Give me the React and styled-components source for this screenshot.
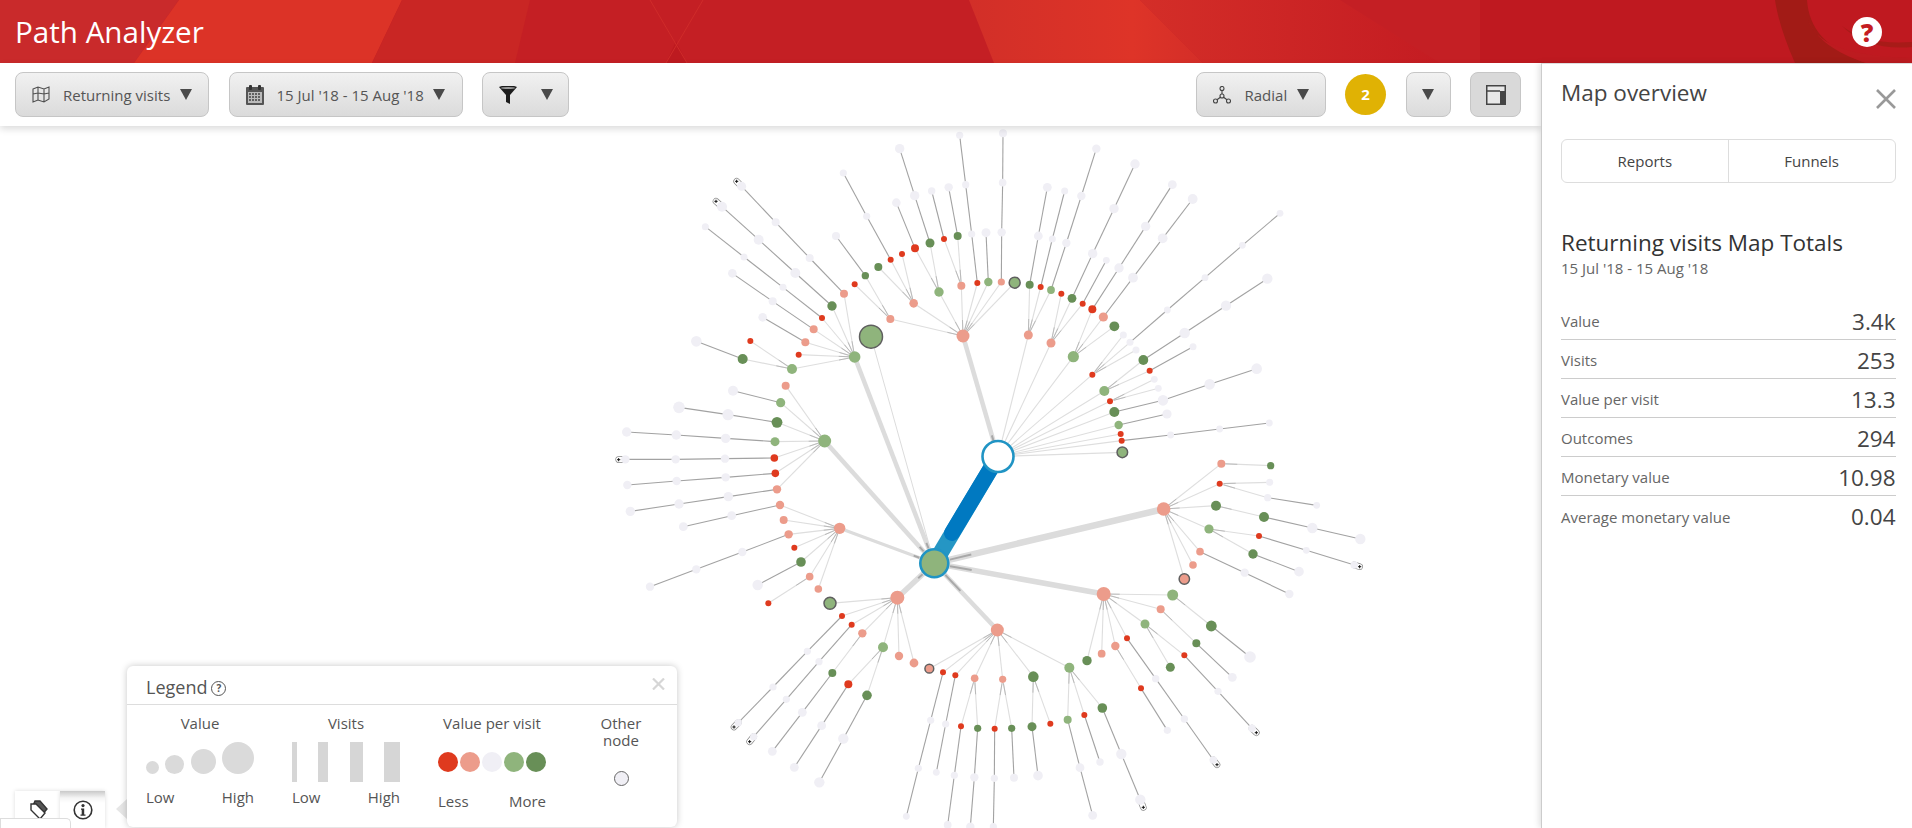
import styled, { createGlobalStyle } from 'styled-components';

const GlobalStyle = createGlobalStyle`
  html, body {
    margin: 0;
    padding: 0;
    height: 100%;
    overflow: hidden;
    background: #fff;
    font-family: 'Open Sans', 'Noto Sans', sans-serif;
  }
`;

// graph data, coordinates are taken from 3x crops so every branch has its own origin
const n = (x, y, r, kind, ...kids) => ({ x, y, r, kind, kids });
const trail = (...pts) =>
  pts.reduceRight(
    (next, [x, y, r]) => n(x, y, r, r === 0 ? 'tag' : 'o', ...(next ? [next] : [])),
    null
  );

const TL = [600, 120];
const TR = [1000, 120];
const BL = [600, 470];
const BR = [1000, 470];

const MAIN = { x: 934.3, y: 563.3, r: 14 };
const WHITE = { x: 998, y: 456.5, r: 15.5 };

const branches = [
  {
    from: MAIN, width: 4.5, origin: TL, hub: n(764, 711, 5.8, 'l',
      n(732, 521, 4, 's', trail([629, 414, 4], [527, 307, 4], [425, 199, 4.5], [410, 184, 0])),
      n(696, 558, 4.7, 'd', trail([586, 459, 5], [476, 359, 5], [366, 260, 5], [348, 244, 0])),
      n(666, 594, 3, 'r', trail([549, 502, 3.5], [432, 411, 3.5], [316, 320, 3.5])),
      n(641, 628, 4, 's', trail([518, 544, 4], [397, 460, 4.3])),
      n(616, 667, 4, 's', trail([488, 592, 4.3])),
      n(596, 704, 3, 'r'),
      n(576, 747, 5, 'l',
        n(428, 717, 5, 'd', trail([289, 664, 5.3])),
        n(451, 663, 3, 'r')
      )
    ),
  },
  {
    from: WHITE, width: 4.5, origin: TL, hub: n(1089, 648, 6.5, 's',
      n(941, 550, 4.3, 's',
        n(872, 419, 3, 'r', trail([800, 289, 3.6], [730, 159, 3.6])),
        n(906, 402, 3, 'r'),
        n(835, 441, 4, 'd')
      ),
      n(871, 597, 4, 's',
        n(796, 467, 3.7, 'd', trail([708, 348, 4])),
        n(764, 493, 3, 'r')
      ),
      n(1017, 516, 4.7, 'l',
        n(945, 385, 4, 'r', trail([889, 248, 4.3])),
        n(990, 369, 4.5, 'd', trail([944, 227, 4.7], [899, 86, 4.7]))
      ),
      n(1084, 497, 4, 's',
        n(1032, 357, 3, 'r', trail([995, 213, 3.7])),
        n(1073, 348, 4, 'd', trail([1046, 202, 4.2]))
      ),
      n(1132, 489, 3, 'r', trail([1115, 342, 3.6], [1097, 194, 3.6], [1079, 46, 3.6])),
      n(1165, 486, 4.2, 'l', trail([1158, 338, 4.5])),
      n(1204, 486, 3.6, 's', trail([1205, 337, 4.2], [1208, 188, 3.8], [1209, 40, 4])),
      n(1244, 488, 5.5, 'ring-l')
    ),
  },
  { from: MAIN, width: 1, origin: TL, hub: n(813, 650, 11.5, 'ring-l') },
  {
    from: MAIN, width: 4.5, origin: TL, hub: n(674, 963, 6.5, 'l',
      n(557, 797, 4, 's'),
      n(542, 848, 4.6, 'l', trail([399, 812, 5])),
      n(531, 907, 5.4, 'd', trail([384, 884, 5.6], [237, 862, 5.8])),
      n(525, 965, 4.5, 'l', trail([377, 955, 4.7], [229, 945, 4.7], [80, 936, 4.7])),
      n(523, 1014, 3.8, 'r', trail([375, 1016, 4.2], [227, 1018, 4.2], [76, 1018, 4.2], [56, 1019, 0])),
      n(526, 1060, 3.8, 'r', trail([377, 1072, 4.2], [230, 1083, 4.2], [82, 1095, 4.2])),
      n(531, 1108, 4.2, 's', trail([385, 1130, 4.7], [237, 1152, 4.7], [91, 1174, 4.7]))
    ),
  },
  {
    from: MAIN, width: 3.2, origin: BL, hub: n(719, 175, 5.7, 's',
      n(540, 105, 4.2, 's', trail([395, 137, 4.4], [250, 170, 4.4])),
      n(551, 150, 4, 's'),
      n(566, 193, 4.2, 's', trail([427, 246, 4.2], [289, 298, 4.2], [150, 350, 4.2])),
      n(583, 233, 3, 'r'),
      n(603, 276, 4.8, 'd', trail([473, 345, 5.2])),
      n(629, 320, 3.8, 's', n(505, 400, 3, 'r')),
      n(655, 357, 3.8, 's')
    ),
  },
  {
    from: MAIN, width: 5.5, origin: BL, hub: n(892, 383, 7, 's',
      n(690, 400, 6, 'ring-l'),
      n(726, 438, 3, 'r', trail([622, 544, 3.6], [519, 651, 3.6], [415, 758, 3.6], [402, 771, 0])),
      n(755, 464, 3, 'r', trail([657, 575, 3.6], [559, 688, 3.6], [461, 800, 3.6], [449, 815, 0])),
      n(787, 490, 4.2, 's', n(697, 609, 4, 'd', trail([607, 727, 4.4], [517, 844, 4.4]))),
      n(849, 532, 5, 'l',
        n(745, 643, 4, 'r', trail([665, 767, 4.4], [583, 892, 4.4])),
        n(801, 676, 4.8, 'd', trail([730, 806, 5.2], [658, 937, 5.2]))
      ),
      n(897, 558, 4.2, 's'),
      n(942, 579, 4.4, 's')
    ),
  },
  {
    from: MAIN, width: 4.5, origin: BL, hub: n(1192, 480, 6.5, 's',
      n(988, 596, 4.4, 'ring-s'),
      n(1029, 607, 3, 'r', trail([992, 751, 3.6], [955, 895, 3.6], [919, 1039, 3.4])),
      n(1066, 616, 3, 'r', trail([1037, 762, 3.6], [1009, 907, 3.4])),
      n(1124, 625, 3.8, 's',
        n(1083, 769, 3, 'r', trail([1063, 916, 3.6], [1043, 1065, 3.9])),
        n(1133, 775, 3.6, 'd', trail([1123, 922, 4.2], [1111, 1070, 4.2]))
      ),
      n(1208, 628, 3.6, 's',
        n(1184, 776, 3, 'r', trail([1183, 925, 3.6], [1180, 1070, 3.6])),
        n(1235, 775, 3.6, 'd', trail([1242, 923, 4]))
      ),
      n(1300, 620, 5.3, 'd',
        n(1296, 770, 4.5, 'd', trail([1314, 917, 4.8])),
        n(1351, 761, 3, 'r')
      ),
      n(1408, 593, 5, 'l',
        n(1403, 749, 4, 'l', trail([1440, 893, 4.4], [1478, 1036, 4.4])),
        n(1453, 735, 3, 'r', trail([1500, 876, 3.7])),
        n(1507, 714, 4.8, 'd', trail([1564, 852, 5.2], [1621, 989, 5.2], [1630, 1012, 0]))
      )
    ),
  },
  {
    from: MAIN, width: 5.5, origin: BR, hub: n(311, 372, 7, 's',
      n(261, 572, 4.7, 'd'),
      n(305, 551, 3.9, 's'),
      n(346, 528, 4.2, 's', n(423, 655, 3, 'r', trail([502, 781, 3.6]))),
      n(381, 505, 3, 'r', trail([467, 626, 3.7], [553, 747, 3.7], [640, 870, 3.8], [651, 884, 0])),
      n(435, 462, 4.5, 'l',
        n(511, 592, 4.5, 'd'),
        n(553, 556, 3, 'r', trail([654, 664, 3.6], [756, 775, 3.8], [769, 788, 0]))
      ),
      n(482, 418, 4, 's', n(589, 520, 4, 'd', trail([697, 622, 4.4]))),
      n(518, 375, 5.5, 'l', n(634, 468, 5.4, 'd', trail([750, 561, 5.8])))
    ),
  },
  {
    from: MAIN, width: 6.5, origin: BR, hub: n(491, 117, 6.8, 's',
      n(664, -19, 4, 's', n(812, -13, 3.6, 'd')),
      n(659, 41, 3, 'r',
        n(809, 37, 3.5, 'p'),
        n(803, 83, 3.6, 'p', trail([950, 106, 3.4]))
      ),
      n(648, 107, 5, 'd', n(792, 141, 5, 'd', trail([937, 174, 5.2], [1081, 207, 5.2]))),
      n(627, 177, 4.6, 'l',
        n(777, 198, 3, 'r', trail([919, 241, 3.4], [1063, 285, 3.8], [1079, 290, 0])),
        n(759, 252, 4.7, 'd', trail([897, 305, 4.8]))
      ),
      n(600, 245, 3.8, 's', trail([734, 308, 4.2], [868, 372, 4.2])),
      n(579, 285, 3.8, 's'),
      n(553, 327, 5.2, 'ring-s')
    ),
  },
];

const whiteKids = [
  n(85, 645, 4.5, 's',
    n(89, 494, 4, 'd', trail([115, 348, 4.4], [142, 202, 4.4])),
    n(122, 501, 3, 'r', trail([157, 357, 3.5], [194, 213, 3.5])),
    n(153, 510, 3.9, 'l', trail([199, 369, 4.2], [244, 228, 4.2], [289, 86, 4.2]))
  ),
  n(153, 669, 4.5, 's',
    n(184, 521, 3, 'r'),
    n(216, 535, 4.4, 'd', trail([278, 401, 4.7], [342, 266, 4.7], [405, 132, 4.7])),
    n(248, 551, 3, 'r', trail([319, 421, 3.4]))
  ),
  n(220, 710, 5.6, 'l',
    n(277, 568, 4, 'r', trail([357, 444, 4.7], [437, 319, 4.7], [517, 194, 4.4])),
    n(310, 591, 4.6, 's', trail([399, 473, 4.9], [488, 355, 4.9], [578, 237, 4.9])),
    n(343, 619, 4.9, 'd')
  ),
  n(277, 764, 3, 'r',
    n(370, 645, 3.5, 'p'),
    n(390, 667, 3.5, 'p', trail([502, 570, 3.4], [615, 473, 3.4], [727, 376, 3.4], [840, 280, 3.4])),
    n(408, 690, 3.5, 'p')
  ),
  n(313, 813, 5, 'l',
    n(430, 720, 4.9, 'd', trail([554, 639, 5.2], [678, 557, 5.2], [802, 476, 5.2])),
    n(449, 752, 3, 'r', trail([579, 680, 3.5]))
  ),
  n(330, 844, 3, 'r', n(463, 778, 3.4, 'p'), n(475, 805, 3.4, 'p')),
  n(343, 876, 5, 'd', trail([489, 841, 5.3], [629, 793, 5.3], [770, 746, 5.3])),
  n(356, 915, 4.2, 'l', trail([501, 882, 4.6])),
  n(362, 942, 3, 'r'),
  n(365, 962, 3, 'r', trail([512, 945, 3.4], [659, 927, 3.4], [808, 909, 3.4])),
  n(367, 997, 5.3, 'ring-l'),
];

const nodes = [];
const edges = [];
const tags = [];

const place = ([ox, oy], item) => ({ ...item, x: ox + item.x / 3, y: oy + item.y / 3 });

const walk = (origin, item, parent, isHub) => {
  const at = place(origin, item);
  if (at.kind === 'tag') {
    tags.push({ x: at.x, y: at.y, px: parent.x, py: parent.y });
    return;
  }
  const dark = at.kind === 'o';
  edges.push({ x1: parent.x, y1: parent.y, x2: at.x, y2: at.y, dark, stub: !dark && isHub });
  nodes.push(at);
  at.kids.forEach((kid) => walk(origin, kid, at, !dark));
};

branches.forEach(({ from, width, origin, hub }) => {
  const at = place(origin, hub);
  edges.push({ x1: from.x, y1: from.y, x2: at.x, y2: at.y, width });
  nodes.push(at);
  at.kids.forEach((kid) => walk(origin, kid, at, true));
});
whiteKids.forEach((kid) => walk(TR, kid, WHITE, true));

const colours = {
  r: '#df3a1e',
  s: '#ec9c8b',
  l: '#8fb47c',
  d: '#688f57',
  o: '#f0eff5',
  p: '#f0eff5',
  'ring-l': '#8fb47c',
  'ring-s': '#ec9c8b',
};

// short darker piece of a line next to its source node
const stubEnd = ({ x1, y1, x2, y2 }, start, length) => {
  const d = Math.hypot(x2 - x1, y2 - y1) || 1;
  const ux = (x2 - x1) / d;
  const uy = (y2 - y1) / d;
  return {
    x1: x1 + ux * start,
    y1: y1 + uy * start,
    x2: x1 + ux * (start + length),
    y2: y1 + uy * (start + length),
  };
};

const GraphSvg = styled.svg`
  position: absolute;
  top: 0;
  left: 0;
  width: 1541px;
  height: 702px;
`;

const PathGraph = () => (
  <GraphSvg viewBox="0 126 1541 702">
    {edges.map((edge, i) =>
      edge.width ? (
        <line
          key={i}
          x1={edge.x1}
          y1={edge.y1}
          x2={edge.x2}
          y2={edge.y2}
          stroke="#dcdcdc"
          strokeWidth={edge.width}
        />
      ) : (
        <line
          key={i}
          x1={edge.x1}
          y1={edge.y1}
          x2={edge.x2}
          y2={edge.y2}
          stroke={edge.dark ? '#a2a2a2' : '#dedede'}
          strokeWidth="1.1"
        />
      )
    )}
    {edges
      .filter((edge) => edge.stub)
      .map((edge, i) => (
        <line key={i} {...stubEnd(edge, 4, 12)} stroke="#b0b0b0" strokeWidth="0.8" />
      ))}
    {edges
      .filter((edge) => edge.width > 3)
      .map((edge, i) => (
        <line
          key={i}
          {...stubEnd(edge, 16, edge.x2 > edge.x1 ? 22 : 6)}
          stroke="#a8a8a8"
          strokeWidth="2"
        />
      ))}
    <line x1={WHITE.x} y1={WHITE.y} x2={MAIN.x} y2={MAIN.y} stroke="#2596c4" strokeWidth="16" />
    <line x1={WHITE.x} y1={WHITE.y} x2={952} y2={533} stroke="#0079c1" strokeWidth="16" strokeLinecap="round" />
    {tags.map((tag, i) => (
      <g key={i}>
        <line x1={tag.x} y1={tag.y} x2={tag.px} y2={tag.py} stroke="#8a8a8a" strokeWidth="6.6" strokeLinecap="round" />
        <line x1={tag.x} y1={tag.y} x2={tag.px} y2={tag.py} stroke="#fff" strokeWidth="5.2" strokeLinecap="round" />
        <path
          d={`M${tag.x - 1.6} ${tag.y}h3.2M${tag.x} ${tag.y - 1.6}v3.2`}
          stroke="#111"
          strokeWidth="1"
        />
      </g>
    ))}
    {nodes.map((node, i) => (
      <circle
        key={i}
        cx={node.x}
        cy={node.y}
        r={node.r}
        fill={colours[node.kind]}
        stroke={node.kind.startsWith('ring') ? '#5f5f5f' : 'none'}
        strokeWidth="1.5"
      />
    ))}
    <circle cx={MAIN.x} cy={MAIN.y} r={MAIN.r} fill="#8fb47c" stroke="#2094c4" strokeWidth="2.6" />
    <circle cx={WHITE.x} cy={WHITE.y} r={WHITE.r} fill="#fff" stroke="#2094c4" strokeWidth="2.6" />
  </GraphSvg>
);

const Page = styled.div`
  display: flex;
  flex-direction: column;
  height: 100vh;
  overflow: hidden;
  color: #555;
`;

const Header = styled.header`
  position: relative;
  flex: 0 0 63px;
  display: flex;
  align-items: center;
  justify-content: space-between;
  padding: 0 30px 0 15px;
  background: #c41c22;
  overflow: hidden;
`;

const HeaderArt = styled.svg`
  position: absolute;
  inset: 0;
  width: 100%;
  height: 100%;
`;

const AppTitle = styled.h1`
  position: relative;
  margin: 0;
  font-size: 29.6px;
  font-weight: 400;
  color: #fff;
`;

const HelpButton = styled.span`
  position: relative;
  width: 30px;
  height: 30px;
  border-radius: 50%;
  background: #fff;
  color: #c41c22;
  font-size: 25px;
  font-weight: 800;
  line-height: 30px;
  text-align: center;
`;

const Body = styled.div`
  flex: 1;
  display: flex;
  min-height: 0;
`;

const Main = styled.main`
  flex: 1;
  min-width: 0;
  display: flex;
  flex-direction: column;
`;

const Toolbar = styled.div`
  position: relative;
  z-index: 2;
  flex: 0 0 63px;
  box-sizing: border-box;
  display: flex;
  align-items: flex-start;
  justify-content: space-between;
  padding: 9px 20px 0 15px;
  background: #fff;
  box-shadow: 0 3px 7px rgba(0, 0, 0, 0.14);
`;

const ToolGroup = styled.div`
  display: flex;
  align-items: center;
  gap: 19.5px;
`;

const ToolButton = styled.button`
  box-sizing: border-box;
  width: ${(p) => p.$width}px;
  height: 45px;
  display: flex;
  align-items: center;
  justify-content: ${(p) => (p.$center ? 'center' : 'flex-start')};
  gap: ${(p) => p.$gap || 13}px;
  padding: ${(p) => (p.$center ? '0' : '0 0 0 16px')};
  border: 1px solid #c6c6c6;
  border-radius: 8px;
  background: ${(p) =>
    p.$active ? '#d9d9d9' : 'linear-gradient(#f1f1f1, #dbdbdb)'};
  color: #555;
  font: 400 15px 'Open Sans', sans-serif;
  white-space: nowrap;
`;

const Caret = styled.i`
  width: 0;
  height: 0;
  margin-left: ${(p) => p.$offset || 0}px;
  border-left: 6.5px solid transparent;
  border-right: 6.5px solid transparent;
  border-top: 11px solid #4a4a4a;
`;

const CountBadge = styled.span`
  width: 41px;
  height: 41px;
  border-radius: 50%;
  background: #e0b204;
  color: #fff;
  font-size: 15px;
  font-weight: 700;
  line-height: 41px;
  text-align: center;
`;

const Canvas = styled.div`
  position: relative;
  flex: 1;
  overflow: hidden;
  background: #fff;
`;

const Legend = styled.section`
  position: absolute;
  left: 127px;
  bottom: 1px;
  width: 550px;
  height: 161px;
  box-sizing: border-box;
  background: #fff;
  border-radius: 6px;
  box-shadow: 0 0 7px rgba(0, 0, 0, 0.22);
`;

const LegendHead = styled.div`
  position: relative;
  height: 39px;
  box-sizing: border-box;
  display: flex;
  align-items: center;
  gap: 4px;
  padding: 3px 0 0 19px;
  border-bottom: 1px solid #ddd;
  font-size: 18px;
  color: #555;
`;

const LegendClose = styled.svg`
  position: absolute;
  top: 12px;
  right: 12px;
  width: 13px;
  height: 12px;
`;

const HelpDot = styled.span`
  box-sizing: border-box;
  width: 15px;
  height: 15px;
  margin-top: 3px;
  border: 1.5px solid #555;
  border-radius: 50%;
  font-size: 10px;
  font-weight: 700;
  line-height: 12px;
  text-align: center;
`;

const LegendBody = styled.div`
  display: flex;
  padding: 10px 0 0 19px;
  gap: 38px;
`;

const LegendCol = styled.div`
  width: ${(p) => p.$width || 108}px;
  margin-left: ${(p) => p.$shift || 0}px;
  display: flex;
  flex-direction: column;
  font-size: 15px;
  line-height: 16px;
`;

const ColTitle = styled.div`
  height: 27px;
  text-align: center;
  white-space: nowrap;
`;

const TallTitle = styled(ColTitle)`
  height: 34px;
  line-height: 17px;
`;

const Swatches = styled.div`
  height: 40px;
  box-sizing: border-box;
  display: flex;
  align-items: ${(p) => p.$align || 'flex-end'};
  justify-content: space-between;
  padding-bottom: ${(p) => p.$pad || 0}px;
`;

const Dot = styled.span`
  flex: none;
  width: ${(p) => p.$size}px;
  height: ${(p) => p.$size}px;
  border-radius: 50%;
  background: ${(p) => p.$color || '#dadada'};
`;

const Bar = styled.span`
  flex: none;
  width: ${(p) => p.$size}px;
  height: 40px;
  background: #d6d6d6;
`;

const Scale = styled.div`
  display: flex;
  justify-content: space-between;
  margin-top: ${(p) => p.$top || 7}px;
`;

const OtherDot = styled.span`
  align-self: center;
  box-sizing: border-box;
  width: 15px;
  height: 15px;
  margin-top: 22px;
  border: 1px solid #666;
  border-radius: 50%;
  background: #f0eff5;
`;

const LegendArrow = styled.i`
  position: absolute;
  left: 116px;
  bottom: 9px;
  width: 0;
  height: 0;
  border-top: 10px solid transparent;
  border-bottom: 10px solid transparent;
  border-right: 11px solid #e6e6e6;
`;

const SideTabs = styled.div`
  position: absolute;
  left: 15px;
  bottom: 0;
  display: flex;
`;

const SideTab = styled.div`
  width: 45px;
  height: 37px;
  box-sizing: border-box;
  display: flex;
  justify-content: center;
  padding-top: 9px;
  background: ${(p) => (p.$active ? 'linear-gradient(#c9c9c9, #f5f5f5 7px, #fff 12px)' : '#fff')};
  box-shadow: 0 0 4px rgba(0, 0, 0, 0.14);
`;

const Hint = styled.div`
  position: absolute;
  left: 0;
  bottom: 0;
  width: 71px;
  height: 10px;
  box-sizing: border-box;
  overflow: hidden;
  padding-left: 2px;
  background: #fff;
  border: 1px solid #ddd;
  border-bottom: 0;
  border-radius: 0 5px 0 0;
  color: #3b6fa8;
  font-size: 13px;
  line-height: 26px;
  white-space: nowrap;
`;

const Panel = styled.aside`
  flex: 0 0 371px;
  box-sizing: border-box;
  position: relative;
  z-index: 3;
  padding: 0 16.5px 0 19px;
  background: #fff;
  border-top: 1px solid #ddd;
  border-left: 1px solid #ccc;
  box-shadow: -2px 0 6px rgba(0, 0, 0, 0.12);
`;

const PanelHead = styled.div`
  height: 75px;
  display: flex;
  justify-content: space-between;
  align-items: flex-start;
`;

const PanelTitle = styled.h2`
  margin: 14px 0 0;
  font-size: 22.5px;
  line-height: 30px;
  font-weight: 400;
  color: #444;
`;

const CloseIcon = styled.svg`
  width: 20px;
  height: 20px;
  margin-top: 25px;
`;

const Tabs = styled.div`
  height: 44px;
  box-sizing: border-box;
  display: flex;
  border: 1px solid #ddd;
  border-radius: 6px;
`;

const Tab = styled.div`
  flex: 1;
  display: flex;
  align-items: center;
  justify-content: center;
  font-size: 15px;
  color: #444;

  & + & {
    border-left: 1px solid #ddd;
  }
`;

const TotalsTitle = styled.h3`
  margin: 45px 0 0;
  font-size: 22.5px;
  line-height: 30px;
  font-weight: 400;
  color: #333;
`;

const TotalsDate = styled.div`
  margin: 0 0 23px;
  font-size: 15px;
  line-height: 20px;
  color: #666;
`;

const StatRow = styled.div`
  height: 39px;
  box-sizing: border-box;
  display: flex;
  align-items: center;
  justify-content: space-between;
  padding-top: 2px;
  font-size: 15px;
  color: #666;

  &:not(:last-child) {
    border-bottom: 1px solid #ccc;
  }
`;

const StatValue = styled.span`
  font-size: 22.5px;
  color: #444;
`;

const stats = [
  ['Value', '3.4k'],
  ['Visits', '253'],
  ['Value per visit', '13.3'],
  ['Outcomes', '294'],
  ['Monetary value', '10.98'],
  ['Average monetary value', '0.04'],
];

const HeaderBackground = () => (
  <HeaderArt viewBox="0 0 1912 63" preserveAspectRatio="none">
    <defs>
      <linearGradient id="band" x1="0" x2="1" y1="0" y2="0">
        <stop offset="0" stopColor="#d22f28" />
        <stop offset="0.7" stopColor="#de3428" />
        <stop offset="1" stopColor="#d42e28" />
      </linearGradient>
      <linearGradient id="fade" x1="0" x2="1" y1="0" y2="0">
        <stop offset="0" stopColor="#d42e28" />
        <stop offset="1" stopColor="#c41c22" />
      </linearGradient>
    </defs>
    <rect width="1912" height="63" fill="#c41f24" />
    <polygon points="0,0 179,0 134,63 0,63" fill="#c92a2b" />
    <polygon points="179,0 402,0 372,63 134,63" fill="#dc3327" />
    <polygon points="402,0 530,0 515,63 372,63" fill="#c92624" />
    <polygon points="676,41 666,63 687,63" fill="#bd1a20" />
    <path d="M650 0L687 63M703 0L666 63" stroke="#cf2c2a" strokeWidth="1" fill="none" />
    <polygon points="1140,0 1340,0 1440,63 1203,63" fill="url(#fade)" />
    <polygon points="969,0 1140,0 1203,63 994,63" fill="url(#band)" />
    <rect x="1480" width="432" height="63" fill="#bf1920" />
    <path d="M1775 0h32c2 28 18 48 59 63h-71c-10-22-17-44-20-63z" fill="#a21b16" />
    <path d="M1808 20c8 22 34 36 104 38v5h-46c-30-10-50-24-58-43z" fill="#bd1b20" />
    <path d="M1842 26c18 14 40 18 70 16v5c-28 3-54-5-70-21z" fill="#a21b16" opacity="0.8" />
  </HeaderArt>
);

const MapIcon = () => (
  <svg width="18" height="17" viewBox="0 0 18 17" fill="none" stroke="#4f4f4f" strokeWidth="1.1">
    <path d="M1 3l5-2 6 2 5-2v12l-5 3-6-2-5 2zM6 1v13M12 3v13M1 8l5-1 6 1 5-1" />
  </svg>
);

const CalendarIcon = () => (
  <svg width="18" height="20" viewBox="0 0 18 20">
    <rect x="0" y="2" width="18" height="18" rx="1" fill="#555" />
    <rect x="3" y="0" width="3" height="5" rx="1" fill="#333" />
    <rect x="12" y="0" width="3" height="5" rx="1" fill="#333" />
    <rect x="2" y="7" width="14" height="11" fill="#bbb" />
    <path d="M3 9h12M3 12h12M3 15h12" stroke="#444" strokeWidth="1.6" strokeDasharray="2 1" />
  </svg>
);

const FunnelIcon = () => (
  <svg width="18" height="18" viewBox="0 0 18 18">
    <path d="M0 1c3-2 15-2 18 0L11 9v9l-4-2V9z" fill="#1c1c1c" />
    <ellipse cx="9" cy="2" rx="7" ry="1.1" fill="#9a9a9a" />
  </svg>
);

const RadialIcon = () => (
  <svg width="18" height="18" viewBox="0 0 18 18" fill="none" stroke="#444" strokeWidth="1.1">
    <circle cx="9" cy="2.5" r="2" />
    <circle cx="9" cy="10" r="2" />
    <circle cx="2.5" cy="15" r="2" />
    <circle cx="15.5" cy="15" r="2" />
    <path d="M9 4.5V8M7.4 11.2L4 13.8M10.6 11.2l3.4 2.6" />
  </svg>
);

const LayoutIcon = () => (
  <svg width="20" height="20" viewBox="0 0 20 20">
    <rect x="0.75" y="0.75" width="18.5" height="18.5" fill="#e8e8e8" stroke="#444" strokeWidth="1.5" />
    <rect x="14" y="6" width="6" height="14" fill="#444" />
    <path d="M1 6h13" stroke="#444" strokeWidth="1.5" />
  </svg>
);

const TagIcon = () => (
  <svg width="20" height="20" viewBox="0 0 20 20" fill="#fff" stroke="#333" strokeWidth="1.4">
    <path d="M7 1l5 0 7 8-6 7-9-8z" fill="#555" />
    <path d="M3 4l5 0 9 9-5 6-9-9z" />
  </svg>
);

const InfoIcon = () => (
  <svg width="20" height="20" viewBox="0 0 20 20">
    <circle cx="10" cy="10" r="8.8" fill="none" stroke="#333" strokeWidth="1.6" />
    <circle cx="10" cy="5.6" r="1.6" fill="#333" />
    <path d="M8 8.5h3.2v6H12.500v1.200H7.500v-1.200h1.200v-4.800H8z" fill="#333" />
  </svg>
);

const App = () => (
  <Page>
    <GlobalStyle />
    <Header>
      <HeaderBackground />
      <AppTitle>Path Analyzer</AppTitle>
      <HelpButton>?</HelpButton>
    </Header>
    <Body>
      <Main>
        <Toolbar>
          <ToolGroup>
            <ToolButton $width={194}>
              <MapIcon />
              Returning visits
              <Caret $offset={-3} />
            </ToolButton>
            <ToolButton $width={234}>
              <CalendarIcon />
              15 Jul '18 - 15 Aug '18
              <Caret $offset={-4} />
            </ToolButton>
            <ToolButton $width={87} $gap={24}>
              <FunnelIcon />
              <Caret />
            </ToolButton>
          </ToolGroup>
          <ToolGroup>
            <ToolButton $width={130} $gap={14}>
              <RadialIcon />
              Radial
              <Caret $offset={-4} />
            </ToolButton>
            <CountBadge>2</CountBadge>
            <ToolButton $width={45} $center>
              <Caret />
            </ToolButton>
            <ToolButton $width={51} $center $active>
              <LayoutIcon />
            </ToolButton>
          </ToolGroup>
        </Toolbar>
        <Canvas>
          <PathGraph />
          <SideTabs>
            <SideTab>
              <TagIcon />
            </SideTab>
            <SideTab $active>
              <InfoIcon />
            </SideTab>
          </SideTabs>
          <Hint>Learn more</Hint>
          <LegendArrow />
          <Legend>
            <LegendHead>
              Legend
              <HelpDot>?</HelpDot>
              <LegendClose viewBox="0 0 13 12" fill="none" stroke="#d6d6d6" strokeWidth="2.2">
                <path d="M1 0.500L12 11.500M12 0.500L1 11.500" />
              </LegendClose>
            </LegendHead>
            <LegendBody>
              <LegendCol>
                <ColTitle>Value</ColTitle>
                <Swatches $pad={8}>
                  <Dot $size={13} />
                  <Dot $size={19} />
                  <Dot $size={25} />
                  <Dot $size={32} />
                </Swatches>
                <Scale>
                  <span>Low</span>
                  <span>High</span>
                </Scale>
              </LegendCol>
              <LegendCol>
                <ColTitle>Visits</ColTitle>
                <Swatches>
                  <Bar $size={5} />
                  <Bar $size={10} />
                  <Bar $size={13} />
                  <Bar $size={16} />
                </Swatches>
                <Scale>
                  <span>Low</span>
                  <span>High</span>
                </Scale>
              </LegendCol>
              <LegendCol>
                <ColTitle>Value per visit</ColTitle>
                <Swatches $align="center">
                  <Dot $size={20} $color="#df3a1e" />
                  <Dot $size={20} $color="#ec9c8b" />
                  <Dot $size={20} $color="#f0eff5" />
                  <Dot $size={20} $color="#8fb47c" />
                  <Dot $size={20} $color="#688f57" />
                </Swatches>
                <Scale $top={11}>
                  <span>Less</span>
                  <span>More</span>
                </Scale>
              </LegendCol>
              <LegendCol $width={60} $shift={7}>
                <TallTitle>
                  Other
                  <br />
                  node
                </TallTitle>
                <OtherDot />
              </LegendCol>
            </LegendBody>
          </Legend>
        </Canvas>
      </Main>
      <Panel>
        <PanelHead>
          <PanelTitle>Map overview</PanelTitle>
          <CloseIcon viewBox="0 0 20 20" fill="none" stroke="#999" strokeWidth="2.6">
            <path d="M1 1l18 18M19 1L1 19" />
          </CloseIcon>
        </PanelHead>
        <Tabs>
          <Tab>Reports</Tab>
          <Tab>Funnels</Tab>
        </Tabs>
        <TotalsTitle>Returning visits Map Totals</TotalsTitle>
        <TotalsDate>15 Jul '18 - 15 Aug '18</TotalsDate>
        {stats.map(([label, value]) => (
          <StatRow key={label}>
            {label}
            <StatValue>{value}</StatValue>
          </StatRow>
        ))}
      </Panel>
    </Body>
  </Page>
);

export default App;
